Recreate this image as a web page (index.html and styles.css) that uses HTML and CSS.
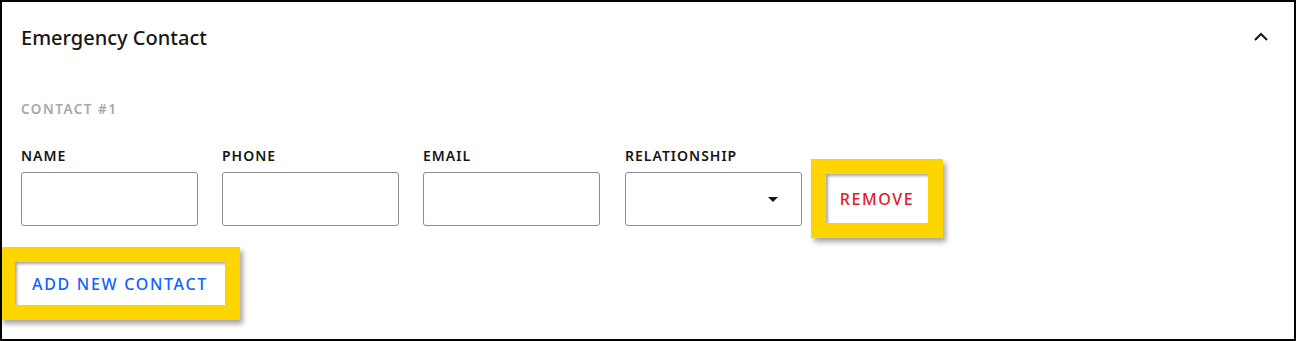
FILE: index.html
```html
<!DOCTYPE html>
<html lang="en">
<head>
<meta charset="utf-8">
<title>Emergency Contact</title>
<link rel="stylesheet" href="styles.css">
</head>
<body>
<section class="panel">
  <header class="panel-header">
    <h2 class="panel-title">Emergency Contact</h2>
    <button class="collapse" aria-label="Collapse">
      <svg width="14" height="9" viewBox="0 0 14 9" aria-hidden="true"><path d="M1 8 L7 2 L13 8" fill="none" stroke="#161616" stroke-width="2"/></svg>
    </button>
  </header>
  <div class="panel-body">
    <div class="contact-heading">CONTACT #1</div>
    <div class="field-row">
      <label class="field">
        <span class="field-label">NAME</span>
        <span class="input"></span>
      </label>
      <label class="field">
        <span class="field-label">PHONE</span>
        <span class="input"></span>
      </label>
      <label class="field">
        <span class="field-label">EMAIL</span>
        <span class="input"></span>
      </label>
      <label class="field field-last">
        <span class="field-label">RELATIONSHIP</span>
        <span class="input select">
          <svg class="caret" width="10" height="5" viewBox="0 0 10 5" aria-hidden="true"><path d="M0 0 H10 L5 5 Z" fill="#161616"/></svg>
        </span>
      </label>
      <button class="btn btn-remove highlight">REMOVE</button>
    </div>
    <button class="btn btn-add highlight">ADD NEW CONTACT</button>
  </div>
</section>
</body>
</html>
```

FILE: styles.css
```css
* { box-sizing: border-box; }
html, body { margin: 0; padding: 0; background: #fff; }
body { font-family: "Noto Sans", "Liberation Sans", sans-serif; color: #161616; }

.panel {
  width: 1296px;
  height: 341px;
  border: 2px solid #000;
  background: #fff;
  overflow: hidden;
}

.panel-header {
  display: flex;
  align-items: center;
  justify-content: space-between;
  height: 72px;
  padding: 0 26px 0 19px;
}

.panel-title {
  margin: 0;
  margin-top: -2px;
  font-size: 20px;
  font-weight: 500;
  letter-spacing: 0;
  color: #161616;
}

.collapse {
  border: 0;
  background: none;
  padding: 0;
  margin-top: -4px;
  display: flex;
}

.panel-body {
  padding: 27px 19px 0;
}

.contact-heading {
  font-size: 13.5px;
  font-weight: 600;
  line-height: 16px;
  letter-spacing: 1.5px;
  color: #a8a8a8;
}

.field-row {
  display: flex;
  gap: 24px;
  margin-top: 31px;
  align-items: flex-end;
}

.field {
  display: flex;
  flex-direction: column;
  gap: 8px;
  width: 177px;
}

.field-last { margin-left: 1px; }

.field-label {
  font-size: 14px;
  font-weight: 600;
  line-height: 16px;
  letter-spacing: 1px;
  color: #161616;
}

.input {
  display: flex;
  align-items: center;
  justify-content: flex-end;
  height: 54px;
  border: 1px solid #8d8d8d;
  border-radius: 3px;
  background: #fff;
}

.select { padding-right: 23px; }

.btn {
  border: 0;
  background: #fff;
  font-family: "Noto Sans", "Liberation Sans", sans-serif;
  font-size: 16px;
  font-weight: 500;
  letter-spacing: 1.6px;
  padding: 0;
  cursor: pointer;
}

.highlight {
  box-shadow:
    inset 2px 2px 3px rgba(0,0,0,0.35),
    0 0 0 15px #ffd500,
    3px 4px 5px 15px rgba(0,0,0,0.35);
}

.btn-remove {
  width: 102px;
  height: 49px;
  margin: 0 0 3px 0;
  color: #da1e28;
}

.btn-add {
  display: block;
  width: 210px;
  height: 43px;
  margin: 36px 0 0 -6px;
  color: #0f62fe;
  letter-spacing: 1.7px;
}
```
